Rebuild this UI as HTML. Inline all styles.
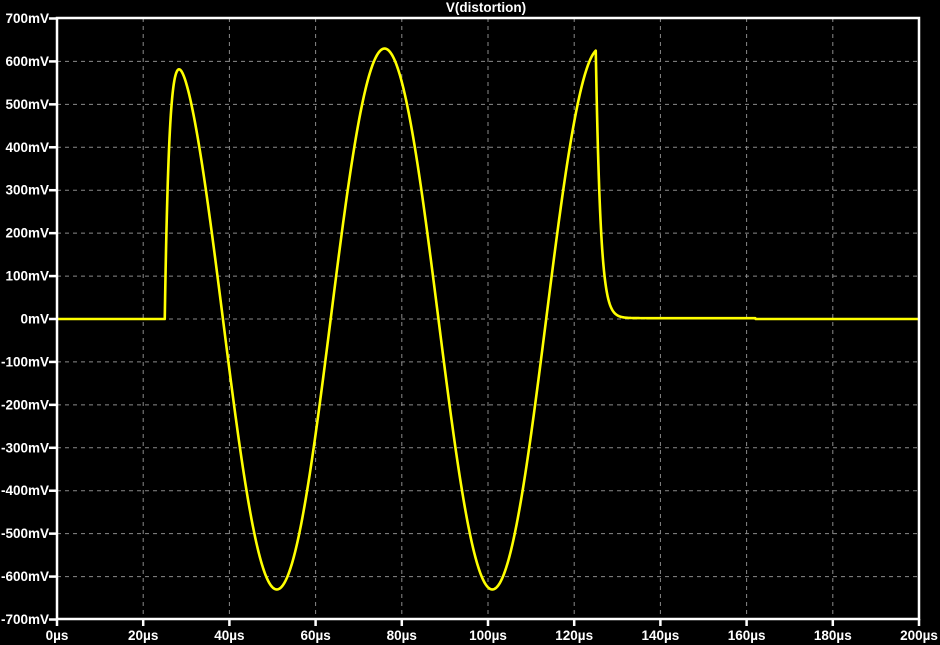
<!DOCTYPE html>
<html><head><meta charset="utf-8"><style>
html,body{margin:0;padding:0;background:#000;width:940px;height:645px;overflow:hidden}
svg{display:block}
text{font-family:"Liberation Sans",sans-serif;font-weight:bold;font-size:13.5px;fill:#fff}
</style></head><body>
<svg id="s" width="940" height="645" viewBox="0 0 940 645" xmlns="http://www.w3.org/2000/svg">
<g id="grid" stroke="#8a8a8a" stroke-width="1" stroke-dasharray="4,4"></g>
<g id="ticks" stroke="#fff" stroke-width="2.5"></g>
<g id="labels"></g>
<text x="486" y="12" text-anchor="middle">V(distortion)</text>
<path id="w" fill="none" stroke="#ffff00" stroke-width="2.6" stroke-linejoin="round"/>
<rect x="57" y="18" width="862" height="601" fill="none" stroke="#fff" stroke-width="2.5"/>
</svg>
<script>
var NS="http://www.w3.org/2000/svg";
function X(t){return 57+t*4.31}
function Y(v){return 319-v*0.42929}
function el(p,n,a,txt){var e=document.createElementNS(NS,n);for(var k in a)e.setAttribute(k,a[k]);if(txt!==undefined)e.textContent=txt;document.getElementById(p).appendChild(e);}
for(var i=1;i<10;i++){var x=X(i*20);el("grid","line",{x1:x,y1:18,x2:x,y2:619});}
for(var j=-6;j<=6;j++){var y=Y(j*100);el("grid","line",{x1:57,y1:y,x2:919,y2:y});}
for(var j=-7;j<=7;j++){var y=Y(j*100);el("ticks","line",{x1:49,y1:y,x2:57,y2:y});el("labels","text",{x:49,y:y+4.5,"text-anchor":"end"},(j*100)+"mV");}
for(var i=0;i<=10;i++){var x=X(i*20);el("ticks","line",{x1:x,y1:619,x2:x,y2:626});el("labels","text",{x:x,y:640,"text-anchor":"middle"},(i*20)+"\u00b5s");}
function sine(t){return 630*Math.cos(2*Math.PI*(t-26)/50);}
var d="",v125=sine(125);
for(var t=0;t<=200;t+=0.1){
 var v;
 if(t<25)v=0;
 else if(t<=125)v=sine(t)*(1-Math.exp(-(t-25)/1.0));
 else v=v125*Math.exp(-(t-125)/1.1)+(t<162?2:0);
 d+=(d?"L":"M")+X(t).toFixed(2)+","+Y(v).toFixed(2);
}
document.getElementById("w").setAttribute("d",d);
</script>
</body></html>
